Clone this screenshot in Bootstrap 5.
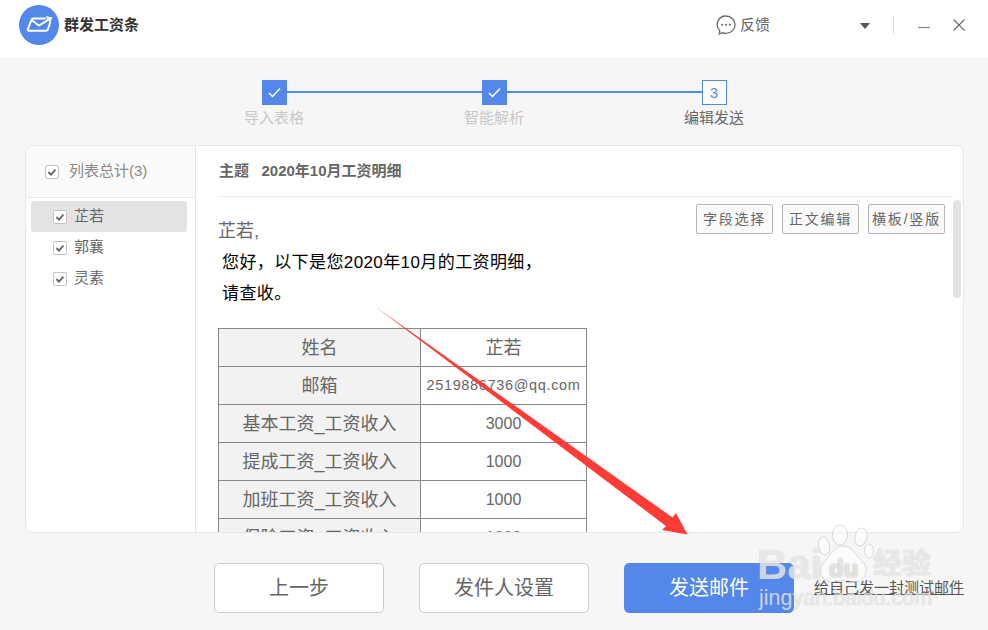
<!DOCTYPE html>
<html lang="zh-CN">
<head>
<meta charset="utf-8">
<title>群发工资条</title>
<link href="https://cdn.jsdelivr.net/npm/bootstrap@5.3.0/dist/css/bootstrap.min.css" rel="stylesheet">
<style>
html,body{height:630px;overflow:hidden}
body{background:#f6f6f6;font-family:"Liberation Sans","Noto Sans CJK SC",sans-serif;color:#666;position:relative}
.topbar{height:58px;background:#fff;padding:0 23px 8px 19px}
.app-name{font-size:15px;font-weight:700;color:#333;margin-left:5px}
.fb-text{font-size:15px;color:#666;margin-left:4px;margin-right:90px}
.caret-ico{margin-right:23px}
.vline{width:1px;height:17px;background:#ddd;margin-right:24px}
.min-ico{margin-right:23px;position:relative;top:-1px}
.stepper{height:87px;padding-top:22px}
.step-item{width:25px;position:relative}
.step-box{width:25px;height:25px;background:#5388ea;border:1px solid #5388ea;font-size:15px;line-height:23px}
.step-box.now{background:#fff;color:#5388ea}
.step-line{width:195px;height:2px;background:#5388ea;margin-top:11px}
.step-lab{position:absolute;top:28px;left:-18px;width:61px;text-align:center;font-size:15px;line-height:20px;color:#c8c8c8;white-space:nowrap}
.step-lab.now{color:#666}
.panel{height:388px;margin:0 24px 0 25px;background:#fff;border:1px solid #e6e6e6;border-radius:8px;overflow:hidden}
.side{width:170px;border-right:1px solid #e6e6e6;background:#fff;flex:none}
.side-head{height:52px;padding-left:19px;border-bottom:1px solid #e9e9e9;font-size:15px;color:#888;background:#fafafa}
.side-head .form-check-input{margin-right:10px}
.side-list{padding:3px 8px 0 5px}
.side-row{height:31px;padding-left:22px;font-size:15px;color:#666;border-radius:3px}
.side-row.on{background:#e3e3e3}
.side-row .form-check-input{margin-right:7px}
.form-check-input.box-chk{width:14px;height:14px;margin-top:0;flex:none;border:1px solid #c4c4c4;border-radius:2px;background-color:#fff;box-shadow:none;background-size:12px 12px;
 background-image:url("data:image/svg+xml,%3csvg xmlns='http://www.w3.org/2000/svg' viewBox='0 0 12 12'%3e%3cpath fill='none' stroke='%23666' stroke-width='1.8' d='M2.4 6l2.6 2.6 4.4-5'/%3e%3c/svg%3e")}
.mail{flex:1;min-width:0;padding-left:22px}
.mail-col{flex:1;min-width:0;overflow:hidden}
.subj{height:51px;border-bottom:1px solid #ececec;font-size:15px;font-weight:700;color:#666;white-space:pre;padding-left:1px}
.tools{float:right;padding:7px 8px 0 0;gap:9px}
.tool-btn{width:77px;height:30px;padding:0;font-size:14px;letter-spacing:1.8px;line-height:28px;color:#666;background:#fafafa;border:1px solid #b5b5b5;border-radius:2px;white-space:nowrap}
.greet{font-size:18px;line-height:31px;color:#666;padding-top:19px}
.para{font-size:17px;line-height:31px;color:#000;padding-left:4px;letter-spacing:.4px}
.sal-table{width:369px;margin:19px 0 0;table-layout:fixed;border-collapse:collapse}
.sal-table td{height:38px;padding:0;border:1px solid #888;text-align:center;vertical-align:middle;font-size:16px;color:#666;line-height:1;white-space:nowrap}
.sal-table td.zh{font-size:18px}
.sal-table td:first-child{width:202px;background:#f2f2f2}
.sal-table td.em{font-size:14.5px;letter-spacing:.65px}
.scroll-col{width:8px;flex:none;padding-top:54px;margin-right:2px}
.scroll-thumb{height:98px;background:#e2e2e2;border-radius:4px}
.foot{padding:30px 0 0 214px}
.foot-btn{width:170px;height:50px;padding:0;font-size:20px;background:#fff;color:#666;border:1px solid #ccc;border-radius:5px;margin-right:35px}
.foot-btn.send{background:#5388ea;border-color:#5388ea;color:#fff;margin-right:20px}
.test-link{font-size:15px;color:#555;text-decoration:underline;white-space:nowrap}
.arrow-layer{position:absolute;left:0;top:0;pointer-events:none}
.wm{position:absolute;color:rgba(255,255,255,.66);text-shadow:0 0 1px rgba(130,130,130,.5);white-space:nowrap;line-height:1}
.wm-bai{left:757px;top:544px;font-size:42px;font-weight:700}
.wm-du{left:829px;top:557px;font-size:24px;font-weight:700;text-shadow:0 0 2px rgba(120,120,120,.7)}
.wm-jy{left:873px;top:550px;font-size:29px;font-weight:700}
.wm-url{left:759px;top:588px;font-size:21.500px}
</style>
</head>
<body>
<header class="topbar d-flex align-items-center">
  <svg width="40" height="40" viewBox="0 0 40 40">
    <circle cx="20" cy="20" r="20" fill="#5388ea"/>
    <path d="M26 13.500H14.500c-1 0-1.700.5-2 1.500L8.800 24c-.3 1 .3 1.800 1.200 1.800h17c1 0 1.700-.5 2-1.500L31 18" fill="none" stroke="#fff" stroke-width="2" stroke-linecap="round"/>
    <path d="M13.500 15.800L20 20.500 30 14.300" fill="none" stroke="#fff" stroke-width="2" stroke-linecap="round"/>
    <path d="M26.500 11l7 1.500-2.500 5.500z" fill="#fff"/>
  </svg>
  <span class="app-name">群发工资条</span>
  <div class="d-flex align-items-center ms-auto">
    <svg width="20" height="20" viewBox="0 0 20 20"><path d="M10 1a9 8.700 0 0 1 0 17.400c-1.500 0-2.600-.2-3.800-.8L3.300 19l.5-3.400A8.500 8.500 0 0 1 10 1z" fill="none" stroke="#666" stroke-width="1.300"/><circle cx="6.200" cy="9.700" r="1" fill="#666"/><circle cx="10" cy="9.700" r="1" fill="#666"/><circle cx="13.800" cy="9.700" r="1" fill="#666"/></svg>
    <span class="fb-text">反馈</span>
    <svg class="caret-ico" width="10" height="7" viewBox="0 0 10 7"><path d="M0 1h10L5 7z" fill="#555"/></svg>
    <span class="vline"></span>
    <svg class="min-ico" width="12" height="12" viewBox="0 0 12 12"><path d="M0 9.500h12" stroke="#888" stroke-width="1.200"/></svg>
    <svg width="12" height="12" viewBox="0 0 12 12"><path d="M.5.500l11 11M11.500.500l-11 11" stroke="#666" stroke-width="1.100"/></svg>
  </div>
</header>

<section class="stepper d-flex justify-content-center align-items-start">
  <div class="step-item">
    <div class="step-box d-flex align-items-center justify-content-center"><svg width="13" height="11" viewBox="0 0 13 11"><path d="M1 6l3.500 3.500L12 1.500" fill="none" stroke="#fff" stroke-width="1.500"/></svg></div>
    <div class="step-lab">导入表格</div>
  </div>
  <div class="step-line"></div>
  <div class="step-item">
    <div class="step-box d-flex align-items-center justify-content-center"><svg width="13" height="11" viewBox="0 0 13 11"><path d="M1 6l3.500 3.500L12 1.500" fill="none" stroke="#fff" stroke-width="1.500"/></svg></div>
    <div class="step-lab">智能解析</div>
  </div>
  <div class="step-line"></div>
  <div class="step-item">
    <div class="step-box now text-center">3</div>
    <div class="step-lab now">编辑发送</div>
  </div>
</section>

<main class="panel d-flex">
  <aside class="side">
    <div class="side-head d-flex align-items-center"><input class="form-check-input box-chk" type="checkbox" checked aria-label="全选">列表总计(3)</div>
    <div class="side-list">
      <div class="side-row on d-flex align-items-center"><input class="form-check-input box-chk" type="checkbox" checked aria-label="芷若">芷若</div>
      <div class="side-row d-flex align-items-center"><input class="form-check-input box-chk" type="checkbox" checked aria-label="郭襄">郭襄</div>
      <div class="side-row d-flex align-items-center"><input class="form-check-input box-chk" type="checkbox" checked aria-label="灵素">灵素</div>
    </div>
  </aside>
  <div class="mail d-flex">
    <div class="mail-col">
      <div class="subj d-flex align-items-center">主题   2020年10月工资明细</div>
      <div class="tools d-flex">
        <button class="btn tool-btn" type="button">字段选择</button>
        <button class="btn tool-btn" type="button">正文编辑</button>
        <button class="btn tool-btn" type="button">横板/竖版</button>
      </div>
      <div class="greet">芷若,</div>
      <div class="para">您好，以下是您2020年10月的工资明细，</div>
      <div class="para">请查收。</div>
      <table class="sal-table">
        <tr><td class="zh">姓名</td><td class="zh">芷若</td></tr>
        <tr><td class="zh">邮箱</td><td class="em">2519886736@qq.com</td></tr>
        <tr><td class="zh">基本工资_工资收入</td><td>3000</td></tr>
        <tr><td class="zh">提成工资_工资收入</td><td>1000</td></tr>
        <tr><td class="zh">加班工资_工资收入</td><td>1000</td></tr>
        <tr><td class="zh">保险工资_工资收入</td><td>1000</td></tr>
      </table>
    </div>
    <div class="scroll-col"><div class="scroll-thumb"></div></div>
  </div>
</main>

<footer class="foot d-flex align-items-center">
  <button class="btn foot-btn" type="button">上一步</button>
  <button class="btn foot-btn" type="button">发件人设置</button>
  <button class="btn foot-btn send" type="button">发送邮件</button>
  <a class="test-link" href="#">给自己发一封测试邮件</a>
</footer>

<svg class="arrow-layer" width="988" height="630" viewBox="0 0 988 630">
  <path d="M376 307L672.500 517.500 676 513 687.500 534.500 662 530 666 526z" fill="#ff3b36"/>
  <g fill="#fff" fill-opacity=".6" stroke="#aaa" stroke-opacity=".4">
    <ellipse cx="824" cy="546" rx="5.500" ry="9" transform="rotate(-10 824 546)"/>
    <ellipse cx="840" cy="535" rx="7.500" ry="10"/>
    <ellipse cx="861" cy="537" rx="6" ry="9" transform="rotate(12 861 537)"/>
    <ellipse cx="869" cy="551" rx="4.500" ry="7"/>
    <path d="M843 546c9 0 12 8 19 15 8 8 4 21-8 21-4 0-7-2-11-2s-6 2-11 2c-11 0-15-12-8-20 6-6 10-16 19-16z"/>
  </g>
</svg>
<span class="wm wm-bai">Bai</span>
<span class="wm wm-du">du</span>
<span class="wm wm-jy">经验</span>
<span class="wm wm-url">jingyan.baidu.com</span>

<script src="https://cdn.jsdelivr.net/npm/bootstrap@5.3.0/dist/js/bootstrap.bundle.min.js"></script>
</body>
</html>
